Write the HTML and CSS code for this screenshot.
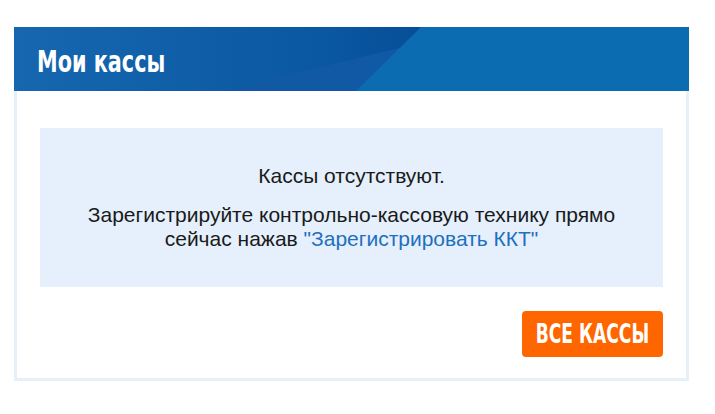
FILE: index.html
```html
<!DOCTYPE html>
<html lang="ru">
   <head>
      <meta charset="UTF-8">
      <meta name="viewport" content="width=device-width, initial-scale=1.0">
      <title>Мои кассы</title>
      <link rel="stylesheet" href="styles.css">
   </head>
   <body>
      <div class="card">
         <div class="card-head">
            <div class="band band-mid"></div>
            <div class="band band-light"></div>
            <h2 class="card-title">Мои кассы</h2>
         </div>
         <div class="card-body">
            <div class="empty-box">
               <p class="empty-title">Кассы отсутствуют.</p>
               <p class="empty-text">Зарегистрируйте контрольно-кассовую технику прямо<br>сейчас нажав <a href="#" class="link">"Зарегистрировать ККТ"</a></p>
            </div>
            <div class="actions">
               <a href="#" class="btn-orange"><span class="btn-label">Все кассы</span></a>
            </div>
         </div>
      </div>
   </body>
</html>
```

FILE: styles.css
```css
body { margin: 0; padding: 27px 26px 0 14px; background: #fff; font-family: "Liberation Sans", Arial, sans-serif; }
.card { width: 675px; box-sizing: border-box; }
.card-head { position: relative; height: 64px; overflow: hidden; background: linear-gradient(90deg, #1666b0 0%, #0b58a2 45%, #064e98 60%, #064e98 100%); display: flex; align-items: center; padding: 4px 0 0 23px; box-sizing: border-box; }
.band { position: absolute; top: 0; left: 0; width: 100%; height: 100%; }
.band-mid { background: #1159a5; clip-path: polygon(208px 64px, 472px 0, 675px 0, 675px 64px); }
.band-light { background: #0b6cb2; clip-path: polygon(342px 64px, 407px 0, 675px 0, 675px 64px); }
.card-title { position: relative; margin: 0; color: #fff; font-family: "DejaVu Sans", sans-serif; font-weight: bold; font-size: 31px; line-height: 36px; white-space: nowrap; transform: scaleX(0.67); transform-origin: left center; }
.card-body { border: 3px solid #e7eff9; border-top: none; padding: 37px 23px 21px 23px; }
.empty-box { background: #e5f0fc; padding: 36px 20px 36px; text-align: center; color: #1a1a1a; font-size: 21px; line-height: 24px; }
.empty-title { margin: 0 0 15px; }
.empty-text { margin: 0; }
.link { color: #1f6fbd; text-decoration: none; }
.actions { display: flex; justify-content: flex-end; margin-top: 24px; }
.btn-orange { display: flex; justify-content: center; align-items: center; width: 141px; height: 46px; background: #ff6600; color: #fff; text-decoration: none; text-transform: uppercase; border-radius: 4px; overflow: hidden; }
.btn-label { display: block; white-space: nowrap; font-family: "DejaVu Sans", sans-serif; font-weight: bold; font-size: 27px; line-height: 30px; transform: scaleX(0.635); }
```
